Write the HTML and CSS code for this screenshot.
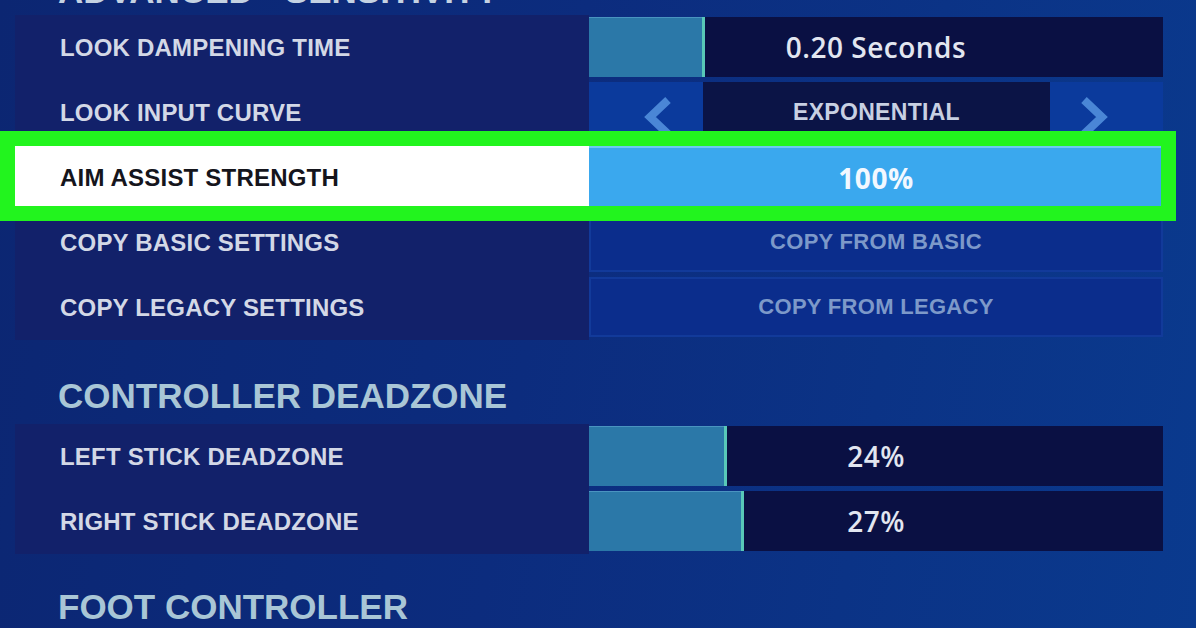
FILE: index.html
```html
<!DOCTYPE html>
<html>
<head>
<meta charset="utf-8">
<link rel="stylesheet" href="styles.css">
</head>
<body>
<div class="page">
  <h2 class="section-title cut">ADVANCED - SENSITIVITY</h2>
  <div class="group">
    <div class="row">
      <div class="label">LOOK DAMPENING TIME</div>
      <div class="value">
        <div class="slider">
          <div class="fill" style="width:20.2%"></div>
          <span class="num">0.20 Seconds</span>
        </div>
      </div>
    </div>
    <div class="row">
      <div class="label">LOOK INPUT CURVE</div>
      <div class="value">
        <div class="selector">
          <div class="arrow left">
            <svg width="30" height="44" viewBox="0 0 30 44"><polyline points="25,7 7,24 25,41" fill="none" stroke="#4a86d6" stroke-width="8" stroke-linejoin="miter"/></svg>
          </div>
          <div class="choice">EXPONENTIAL</div>
          <div class="arrow right">
            <svg width="30" height="44" viewBox="0 0 30 44"><polyline points="5,7 23,24 5,41" fill="none" stroke="#4a86d6" stroke-width="8" stroke-linejoin="miter"/></svg>
          </div>
        </div>
      </div>
    </div>
    <div class="row selected">
      <div class="label">AIM ASSIST STRENGTH</div>
      <div class="value">
        <div class="full-bar"><span class="num">100%</span></div>
      </div>
      <div class="highlight"></div>
    </div>
    <div class="row">
      <div class="label">COPY BASIC SETTINGS</div>
      <div class="value">
        <div class="button">COPY FROM BASIC</div>
      </div>
    </div>
    <div class="row">
      <div class="label">COPY LEGACY SETTINGS</div>
      <div class="value">
        <div class="button">COPY FROM LEGACY</div>
      </div>
    </div>
  </div>

  <h2 class="section-title">CONTROLLER DEADZONE</h2>
  <div class="group">
    <div class="row">
      <div class="label">LEFT STICK DEADZONE</div>
      <div class="value">
        <div class="slider">
          <div class="fill" style="width:24%"></div>
          <span class="num">24%</span>
        </div>
      </div>
    </div>
    <div class="row">
      <div class="label">RIGHT STICK DEADZONE</div>
      <div class="value">
        <div class="slider">
          <div class="fill" style="width:27%"></div>
          <span class="num">27%</span>
        </div>
      </div>
    </div>
  </div>

  <h2 class="section-title foot">FOOT CONTROLLER</h2>
</div>
</body>
</html>
```
FILE: styles.css
```css
html, body {
  margin: 0;
  padding: 0;
}
body {
  width: 1196px;
  height: 628px;
  overflow: hidden;
  background: linear-gradient(100deg, #0c2672 0%, #0c2c7e 45%, #0a3a8e 100%);
  font-family: "Liberation Sans", Arial, sans-serif;
}
.page {
  padding: 0 33px 0 15px;
}
.section-title {
  margin: 0;
  padding-left: 43px;
  font-size: 35px;
  line-height: 40px;
  height: 40px;
  font-weight: bold;
  color: #a9c6d6;
  white-space: nowrap;
}
.section-title.cut {
  margin-top: -29px;
  margin-bottom: 4px;
  color: #c4d2e2;
}
.group {
  display: flex;
  flex-direction: column;
  margin-bottom: 36px;
}
.group + .section-title {
  margin-bottom: 8px;
}
.section-title.foot {
  margin-top: -3px;
}
.row {
  display: grid;
  grid-template-columns: 574px 574px;
  height: 65px;
}
.label {
  background: #12216a;
  display: flex;
  align-items: center;
  padding-left: 45px;
  font-size: 24px;
  font-weight: bold;
  letter-spacing: 0.2px;
  color: #d3d8e6;
  white-space: nowrap;
}
.value {
  padding: 2px 0 3px;
}
.slider {
  position: relative;
  height: 100%;
  background: #0a1043;
  display: flex;
  align-items: center;
  justify-content: center;
}
.fill {
  position: absolute;
  left: 0;
  top: 0;
  bottom: 0;
  background: #2b78a8;
  border-right: 3px solid #58c8b8;
  box-shadow: inset 0 1px 0 #4a94c0;
  box-sizing: border-box;
}
.num {
  position: relative;
  font-family: "Open Sans", "Noto Sans", sans-serif;
  font-weight: 600;
  font-size: 28px;
  letter-spacing: 0.5px;
  color: #e2e6f0;
}
.selector {
  height: 100%;
  display: grid;
  grid-template-columns: 114px 1fr 113px;
}
.arrow {
  background: #0b3a9c;
  display: flex;
  align-items: center;
}
.arrow svg {
  margin-top: 6px;
}
.arrow.left {
  justify-content: flex-end;
  padding-right: 30px;
}
.arrow.right {
  justify-content: flex-start;
  padding-left: 29px;
}
.choice {
  background: #0b1446;
  display: flex;
  align-items: center;
  justify-content: center;
  font-size: 23px;
  font-weight: bold;
  color: #c8d0e2;
  letter-spacing: 0.3px;
}
.selected {
  position: relative;
}
.selected .label {
  background: #ffffff;
  color: #15151c;
}
.selected .value {
  padding: 0;
}
.full-bar {
  height: 100%;
  background: #3aa8ee;
  box-shadow: inset 0 3px 0 #6ccaf2;
  display: flex;
  align-items: center;
  justify-content: center;
}
.full-bar .num {
  color: #f2f8ff;
  font-weight: 700;
}
.highlight {
  position: absolute;
  left: -15px;
  right: -13px;
  top: -14px;
  bottom: -11px;
  border: 15px solid #22f41e;
  pointer-events: none;
}
.button {
  height: 100%;
  box-sizing: border-box;
  background: #0b2d8c;
  border: 2px solid #123a9a;
  display: flex;
  align-items: center;
  justify-content: center;
  font-size: 22px;
  font-weight: bold;
  color: #7d99c9;
  letter-spacing: 0.3px;
}
```
